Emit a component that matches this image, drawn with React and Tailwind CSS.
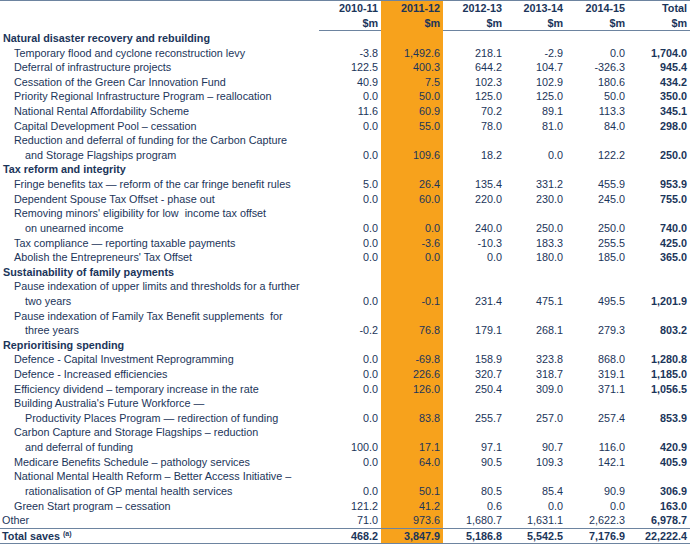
import React from "react";

// budget savings table — 2011-12 column highlighted
const COLS = "grid grid-cols-[319px_62px_62px_62px_61px_62px_62px]";
const INK = "text-[#1b355a]";
const RULE = "bg-[#6d84a0]";
const ORANGE = "bg-[#f7a21c]";

const rows = [
  ["h", "Natural disaster recovery and rebuilding"],
  ["i", "Temporary flood and cyclone reconstruction levy", "-3.8", "1,492.6", "218.1", "-2.9", "0.0", "1,704.0"],
  ["i", "Deferral of infrastructure projects", "122.5", "400.3", "644.2", "104.7", "-326.3", "945.4"],
  ["i", "Cessation of the Green Car Innovation Fund", "40.9", "7.5", "102.3", "102.9", "180.6", "434.2"],
  ["i", "Priority Regional Infrastructure Program – reallocation", "0.0", "50.0", "125.0", "125.0", "50.0", "350.0"],
  ["i", "National Rental Affordability Scheme", "11.6", "60.9", "70.2", "89.1", "113.3", "345.1"],
  ["i", "Capital Development Pool – cessation", "0.0", "55.0", "78.0", "81.0", "84.0", "298.0"],
  ["i", "Reduction and deferral of funding for the Carbon Capture"],
  ["c", "and Storage Flagships program", "0.0", "109.6", "18.2", "0.0", "122.2", "250.0"],
  ["h", "Tax reform and integrity"],
  ["i", "Fringe benefits tax — reform of the car fringe benefit rules", "5.0", "26.4", "135.4", "331.2", "455.9", "953.9"],
  ["i", "Dependent Spouse Tax Offset - phase out", "0.0", "60.0", "220.0", "230.0", "245.0", "755.0"],
  ["i", "Removing minors' eligibility for low  income tax offset"],
  ["c", "on unearned income", "0.0", "0.0", "240.0", "250.0", "250.0", "740.0"],
  ["i", "Tax compliance — reporting taxable payments", "0.0", "-3.6", "-10.3", "183.3", "255.5", "425.0"],
  ["i", "Abolish the Entrepreneurs' Tax Offset", "0.0", "0.0", "0.0", "180.0", "185.0", "365.0"],
  ["h", "Sustainability of family payments"],
  ["i", "Pause indexation of upper limits and thresholds for a further"],
  ["c", "two years", "0.0", "-0.1", "231.4", "475.1", "495.5", "1,201.9"],
  ["i", "Pause indexation of Family Tax Benefit supplements  for"],
  ["c", "three years", "-0.2", "76.8", "179.1", "268.1", "279.3", "803.2"],
  ["h", "Reprioritising spending"],
  ["i", "Defence - Capital Investment Reprogramming", "0.0", "-69.8", "158.9", "323.8", "868.0", "1,280.8"],
  ["i", "Defence - Increased efficiencies", "0.0", "226.6", "320.7", "318.7", "319.1", "1,185.0"],
  ["i", "Efficiency dividend – temporary increase in the rate", "0.0", "126.0", "250.4", "309.0", "371.1", "1,056.5"],
  ["i", "Building Australia's Future Workforce —"],
  ["c", "Productivity Places Program — redirection of funding", "0.0", "83.8", "255.7", "257.0", "257.4", "853.9"],
  ["i", "Carbon Capture and Storage Flagships – reduction"],
  ["c", "and deferral of funding", "100.0", "17.1", "97.1", "90.7", "116.0", "420.9"],
  ["i", "Medicare Benefits Schedule – pathology services", "0.0", "64.0", "90.5", "109.3", "142.1", "405.9"],
  ["i", "National Mental Health Reform – Better Access Initiative –"],
  ["c", "rationalisation of GP mental health services", "0.0", "50.1", "80.5", "85.4", "90.9", "306.9"],
  ["i", "Green Start program – cessation", "121.2", "41.2", "0.6", "0.0", "0.0", "163.0"],
  ["o", "Other", "71.0", "973.6", "1,680.7", "1,631.1", "2,622.3", "6,978.7"],
];

const indent = { h: "pl-[3px] font-bold", i: "pl-[14px]", c: "pl-[25px]", o: "pl-[2px]" };

function Num({ value, col, bold }) {
  return (
    <div
      className={`pr-[3px] text-right ${col === 1 ? ORANGE : ""} ${bold ? "font-bold" : ""}`}
    >
      {value}
    </div>
  );
}

function HeaderRow({ cells }) {
  return (
    <div className={`${COLS} h-[14.5px] leading-[14.5px] font-bold`}>
      <div />
      {cells.map((c, i) => (
        <Num key={i} value={c} col={i} />
      ))}
    </div>
  );
}

export default function App() {
  return (
    <div
      className={`w-[690px] h-[544px] bg-white flex flex-col overflow-hidden font-['Liberation_Sans',Arial,sans-serif] text-[10.8px] ${INK}`}
    >
      <div className={`h-px ${RULE}`} />
      <HeaderRow cells={["2010-11", "2011-12", "2012-13", "2013-14", "2014-15", "Total"]} />
      <HeaderRow cells={["$m", "$m", "$m", "$m", "$m", "$m"]} />
      <div className={`${COLS} h-px`}>
        <div />
        <div className={RULE} />
        <div className={ORANGE} />
        <div className={`col-span-4 ${RULE}`} />
      </div>

      {rows.map(([kind, label, ...vals], r) => (
        <div key={r} className={`${COLS} h-[14.62px] leading-[14.62px]`}>
          <div className={`whitespace-pre ${indent[kind]}`}>{label}</div>
          {vals.length
            ? vals.map((v, i) => <Num key={i} value={v} col={i} bold={i === 5} />)
            : [0, 1, 2, 3, 4, 5].map((i) => <Num key={i} value="" col={i} />)}
        </div>
      ))}

      <div className={`h-px ${RULE}`} />
      <div className={`${COLS} h-[14px] leading-[14px] font-bold`}>
        <div className="pl-[2px]">
          Total saves <sup className="text-[7px] font-bold">(a)</sup>
        </div>
        {["468.2", "3,847.9", "5,186.8", "5,542.5", "7,176.9", "22,222.4"].map((v, i) => (
          <Num key={i} value={v} col={i} />
        ))}
      </div>
      <div className={`h-px ${RULE}`} />
      <div className={`${COLS} flex-1`}>
        <div />
        <div />
        <div className={ORANGE} />
      </div>
    </div>
  );
}
